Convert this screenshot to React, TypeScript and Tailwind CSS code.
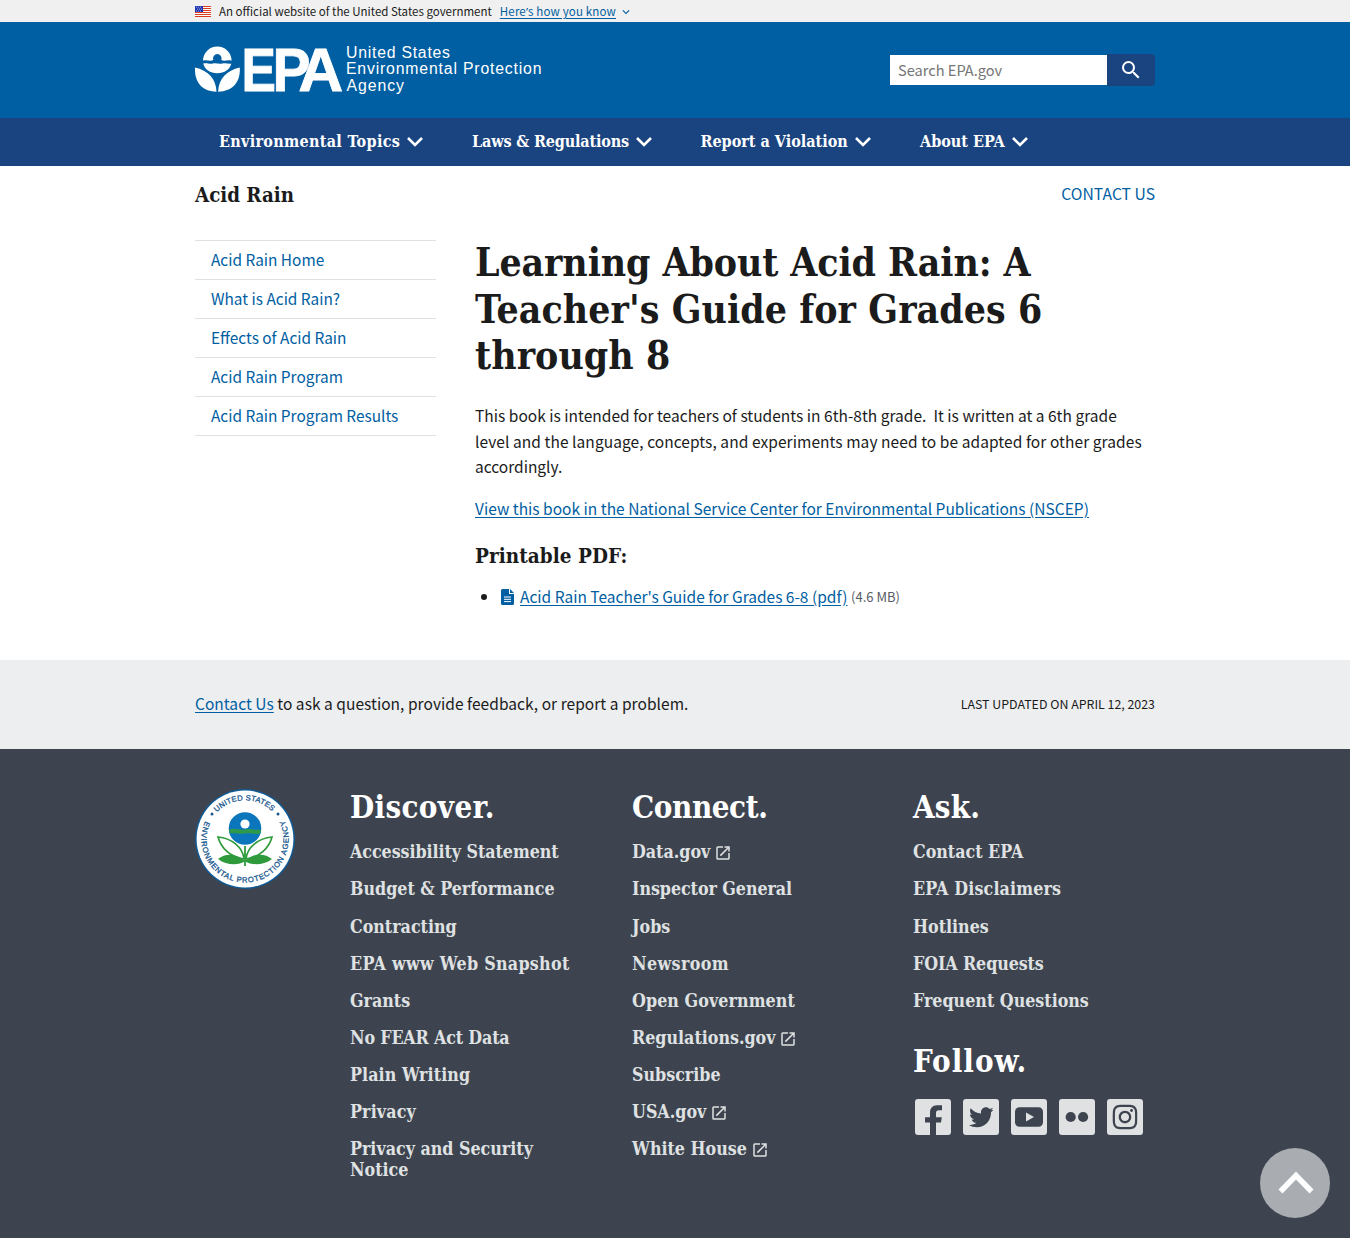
import type { ReactNode } from 'react';
import { FaTwitter, FaInstagram } from 'react-icons/fa';
import { MdSearch, MdExpandMore, MdOpenInNew } from 'react-icons/md';

const link = 'text-[#005ea2] underline underline-offset-[2px]';
const serif = "font-['DejaVu_Serif_Condensed','DejaVu_Serif',serif] font-bold";

function Flag() {
  return (
    <svg viewBox="0 0 16 11" className="h-[11px] w-4">
      <rect width="16" height="11" fill="#fff" />
      {[0, 2, 4, 6, 8, 10].map((y) => (
        <rect key={y} y={y} width="16" height="1" fill="#db3e1f" />
      ))}
      <rect width="8" height="6" fill="#1e33b1" />
      {[1, 3, 5].map((y) =>
        [1, 3, 5].map((x) => <rect key={`${x}-${y}`} x={x + (y === 3 ? 1 : 0)} y={y - 0.3} width="0.8" height="0.8" fill="#fff" />),
      )}
    </svg>
  );
}

function EpaLogo() {
  return (
    <svg viewBox="195 44 350 52" className="h-[52px] w-[350px]" fill="#fff">
      <g transform="translate(0 -0.700)">
        <path d="M203 61.500 A14.300 14.300 0 0 1 231.600 61.500 C228 60 224.500 62.500 221.300 60.700 A4.300 4.300 0 1 0 213.300 60.700 C210 62.500 206.500 60 203 61.500Z" />
        <path d="M203.200 64.200 C207 63 209.500 65.300 213 64.200 C216 63.300 219 65.300 222.500 64.200 C226 63.200 228.500 65 231.400 64.200 C230 70 224.500 74 217.300 74 C210 74 204.600 70 203.200 64.200Z" />
        <path d="M195 68.300 C208 71.300 216 79 216.500 92.500 C202 92.200 194.200 83 195 68.300Z" />
        <path d="M239.800 68.300 C226.800 71.300 218.600 79 218.100 92.500 C232.600 92.200 240.600 83 239.800 68.300Z" />
      </g>
      <g fontFamily="Liberation Sans" fontWeight="bold" fontSize="62" stroke="#fff" strokeWidth="0.800">
        <text x="241.400" y="90.800" textLength="34.500" lengthAdjust="spacingAndGlyphs">E</text>
        <text x="272.600" y="90.800" textLength="38" lengthAdjust="spacingAndGlyphs">P</text>
        <text x="298.300" y="90.800" textLength="45" lengthAdjust="spacingAndGlyphs">A</text>
      </g>
      <g fontFamily="Liberation Sans" fontSize="15.800">
        <text x="346" y="58.300" textLength="104">United States</text>
        <text x="346" y="74.300" textLength="195.500">Environmental Protection</text>
        <text x="346.500" y="90.800" textLength="57.500">Agency</text>
      </g>
    </svg>
  );
}

function Seal() {
  return (
    <svg viewBox="-50 -50 100 100" className="size-[100px]">
      <defs>
        <path id="arc-top" d="M-28.200 -26.600 A38.800 38.800 0 0 1 28.200 -26.600" />
        <path id="arc-bottom" d="M-39.700 -18 A43.600 43.600 0 1 0 39.700 -18" />
      </defs>
      <circle r="49.900" fill="#0f5b96" />
      <circle r="48.400" fill="#fff" />
      <g fontFamily="Liberation Sans" fontSize="7.600" fill="#17578f" stroke="#17578f" strokeWidth="0.300">
        <text textLength="61.500"><textPath href="#arc-top" textLength="61.500">UNITED STATES</textPath></text>
        <text textLength="174.500"><textPath href="#arc-bottom" textLength="174.500">ENVIRONMENTAL PROTECTION AGENCY</textPath></text>
      </g>
      <circle cx="-33" cy="-25" r="1.500" fill="#17578f" />
      <circle cx="33" cy="-25" r="1.500" fill="#17578f" />
      <circle cy="-10.500" r="16.300" fill="#0c76bd" />
      <path d="M-16 -9.500 C-10 -11.500 -5 -8.500 0 -9.500 C6 -10.800 10 -8.500 16 -9.500 L15.200 -5.500 C9 -4 5 -6.500 0 -5.500 C-6 -4.500 -10 -6.500 -15.200 -5.500Z" fill="#2d9a4b" />
      <circle cy="-15" r="4.600" fill="#fff" />
      <path d="M0 7 V27" stroke="#2f9a3c" strokeWidth="1.800" />
      <g fill="#fff" stroke="#2f9a3c" strokeWidth="1.700">
        <path d="M-1 20 C-2 8 -14 -1 -27 -2 C-24 9 -15 18 -1 20Z" />
        <path d="M1 20 C2 8 14 -1 27 -2 C24 9 15 18 1 20Z" />
      </g>
      <path d="M-27 20 C-19 13 -7 15 0 22 C7 15 19 13 27 20 C18 27 6 26 0 22.500 C-6 26 -18 27 -27 20Z" fill="#2f9a3c" />
    </svg>
  );
}

function NavItem({ label, className }: { label: string; className: string }) {
  return (
    <a className={`flex h-12 items-center justify-between pl-6 pr-[25px] text-base whitespace-nowrap ${serif} ${className}`}>
      <span>{label}</span>
      <svg viewBox="0 0 16 10" className="h-[10px] w-4 shrink-0" fill="none" stroke="#fff" strokeWidth="2.600">
        <path d="M1 1 L8 8 L15 1" />
      </svg>
    </a>
  );
}

type FooterLink = { label: string; external?: boolean; tracking?: string };

const discover: FooterLink[] = [
  { label: 'Accessibility Statement', tracking: 'tracking-[-0.05px]' },
  { label: 'Budget & Performance' },
  { label: 'Contracting' },
  { label: 'EPA www Web Snapshot', tracking: 'tracking-[0.3px]' },
  { label: 'Grants' },
  { label: 'No FEAR Act Data', tracking: 'tracking-[-0.15px]' },
  { label: 'Plain Writing', tracking: 'tracking-[0.08px]' },
  { label: 'Privacy', tracking: 'tracking-[0.15px]' },
  { label: 'Privacy and Security Notice' },
];
const connect: FooterLink[] = [
  { label: 'Data.gov', external: true },
  { label: 'Inspector General', tracking: 'tracking-[-0.05px]' },
  { label: 'Jobs' },
  { label: 'Newsroom', tracking: 'tracking-[0.4px]' },
  { label: 'Open Government', tracking: 'tracking-[0.08px]' },
  { label: 'Regulations.gov', external: true },
  { label: 'Subscribe' },
  { label: 'USA.gov', external: true },
  { label: 'White House', external: true },
];
const ask: FooterLink[] = [
  { label: 'Contact EPA' },
  { label: 'EPA Disclaimers', tracking: 'tracking-[0.15px]' },
  { label: 'Hotlines' },
  { label: 'FOIA Requests', tracking: 'tracking-[-0.1px]' },
  { label: 'Frequent Questions' },
];

function Heading({ children, className }: { children: ReactNode; className: string }) {
  return <h2 className={`h-[38px] text-[31px] leading-[38px] text-white ${serif} ${className}`}>{children}</h2>;
}

function LinkList({ items }: { items: FooterLink[] }) {
  return (
    <ul className={`mt-[15.4px] flex flex-col gap-4 text-[17.7px] leading-[21.100px] text-[#dfe1e2] ${serif}`}>
      {items.map((item) => (
        <li key={item.label} className={`flex items-center ${item.tracking ?? ''}`}>
          {item.label}
          {item.external && <MdOpenInNew className="mt-[3px] ml-[4px] size-[18px]" />}
        </li>
      ))}
    </ul>
  );
}

function SocialTile({ children }: { children: ReactNode }) {
  return <a className="flex size-9 items-center justify-center rounded-[3px] bg-[#dfe1e2] text-[#3e444f]">{children}</a>;
}

export default function App() {
  return (
    <div className="relative flex h-[1238px] w-[1350px] flex-col overflow-hidden bg-white font-['Noto_Sans_CJK_SC',sans-serif] text-[15.5px] text-[#1b1b1b]">
      <div className="h-[22px] bg-[#f0f0f0]">
        <div className="mx-auto flex h-full w-[960px] items-center text-[11.5px] whitespace-nowrap">
          <Flag />
          <span className="mt-px ml-2">An official website of the United States government</span>
          <a className="mt-px ml-2 flex items-center text-[#005ea2]">
            <span className="tracking-[0.16px] underline underline-offset-[2px]">
              Here<span className="font-['Noto_Sans']">’</span>s how you know
            </span>
            <MdExpandMore className="ml-[3px] size-[14px]" />
          </a>
        </div>
      </div>

      <header>
        <div className="h-24 bg-[#005ea2]">
          <div className="mx-auto flex h-full w-[960px] items-center justify-between">
            <EpaLogo />
            <div className="flex h-8 w-[265px] items-center">
              <div className="flex h-[30px] w-[217px] items-center bg-white pl-2 text-[14.6px] text-[#757575]">Search EPA.gov</div>
              <button className="flex h-8 w-12 items-center justify-center rounded-r bg-[#1a4480] text-white">
                <MdSearch className="size-6" />
              </button>
            </div>
          </div>
        </div>
        <nav className="h-12 bg-[#1a4480] text-white">
          <div className="mx-auto flex w-[960px]">
            <NavItem label="Environmental Topics" className="w-[253px] tracking-[0.3px]" />
            <NavItem label="Laws & Regulations" className="w-[228.500px] tracking-[-0.150px]" />
            <NavItem label="Report a Violation" className="w-[219.500px]" />
            <NavItem label="About EPA" className="w-[157px]" />
          </div>
        </nav>
      </header>

      <main className="mx-auto w-[960px]">
        <div className="flex h-[57px] items-center justify-between">
          <div className={`mt-px text-[20.3px] ${serif}`}>Acid Rain</div>
          <a className="-mt-[2px] text-[15.7px] text-[#005ea2]">CONTACT US</a>
        </div>
        <div className="mt-[17px] flex gap-[39px]">
          <ul className="h-[196px] w-[241px] shrink-0 border-b border-[#dfe1e2] text-[15.400px] text-[#005ea2]">
            {['Acid Rain Home', 'What is Acid Rain?', 'Effects of Acid Rain', 'Acid Rain Program', 'Acid Rain Program Results'].map((t) => (
              <li key={t} className="flex h-[39px] items-center border-t border-[#dfe1e2] pl-4">{t}</li>
            ))}
          </ul>
          <div className="w-[680px]">
            <h1 className={`text-[38.8px] leading-[46.6px] tracking-[0.060px] ${serif}`}>
              <span className="tracking-[-0.1px]">Learning About Acid Rain: A</span>
              <br />
              Teacher's Guide for Grades 6
              <br />
              through 8
            </h1>
            <p className="mt-[23.300px] leading-[25.6px] whitespace-nowrap">
              <span className="tracking-[0.020px]">This book is intended for teachers of students in 6th-8th grade.&nbsp; It is written at a 6th grade</span>
              <br />
              <span className="tracking-[0.07px]">level and the language, concepts, and experiments may need to be adapted for other grades</span>
              <br />
              accordingly.
            </p>
            <p className="mt-[15.700px] leading-[25.6px]">
              <a className={`tracking-[0.012px] ${link}`}>View this book in the National Service Center for Environmental Publications (NSCEP)</a>
            </p>
            <h3 className={`mt-[22px] text-[20.5px] leading-[27px] tracking-[0.050px] ${serif}`}>Printable PDF:</h3>
            <ul className="mt-[14px] leading-[25.6px]">
              <li className="flex items-center">
                <span className="mr-[13.500px] ml-[6px] size-[6px] rounded-full bg-[#1b1b1b]" />
                <svg viewBox="0 0 13 16" className="mr-[6.500px] h-4 w-[13px]" fill="#005ea2">
                  <path d="M1.500 0 H8 V4.500 Q8 5 8.500 5 H13 V14.500 Q13 16 11.500 16 H1.500 Q0 16 0 14.500 V1.500 Q0 0 1.500 0Z M9 0 L13 4 H9Z" />
                  <path d="M3 8 H10 M3 10.300 H10 M3 12.600 H10" stroke="#fff" strokeWidth="1" />
                </svg>
                <a className={link}>Acid Rain Teacher's Guide for Grades 6-8 (pdf)</a>
                <span className="ml-[3.500px] text-[13px] text-[#565c65]">(4.6 MB)</span>
              </li>
            </ul>
          </div>
        </div>
      </main>

      <section className="mt-auto h-[89px] bg-[#edeef0]">
        <div className="mx-auto flex h-full w-[960px] items-center justify-between">
          <p className="-mt-[2px] tracking-[0.040px]">
            <a className={link}>Contact Us</a> to ask a question, provide feedback, or report a problem.
          </p>
          <span className="text-[12.4px]">LAST UPDATED ON APRIL 12, 2023</span>
        </div>
      </section>

      <footer className="h-[489px] bg-[#3e444f]">
        <div className="mx-auto flex w-[960px] pt-[39px]">
          <div className="w-[155px] shrink-0 pt-px">
            <Seal />
          </div>
          <div className="w-[282px] shrink-0 pr-14">
            <Heading className="tracking-[0.35px]">Discover.</Heading>
            <LinkList items={discover} />
          </div>
          <div className="w-[281px] shrink-0">
            <Heading className="tracking-[-0.4px]">Connect.</Heading>
            <LinkList items={connect} />
          </div>
          <div className="w-[242px] shrink-0">
            <Heading className="tracking-[0.2px]">Ask.</Heading>
            <LinkList items={ask} />
            <div className="mt-[31px]">
              <Heading className="tracking-[1px]">Follow.</Heading>
            </div>
            <div className="mt-[19.500px] ml-[2px] flex gap-3">
              <SocialTile>
                <svg viewBox="0 0 36 36" className="size-9" fill="currentColor">
                  <path d="M15 36 V23.500 H10 V18.300 H15 V14 Q15 6.300 22 6.300 H27 V11.200 H23.800 Q21 11.200 21 14 V18.300 H26.800 L26 23.500 H21 V36Z" />
                </svg>
              </SocialTile>
              <SocialTile>
                <FaTwitter className="size-[24.500px]" />
              </SocialTile>
              <SocialTile>
                <svg viewBox="0 0 36 36" className="size-9">
                  <rect x="4" y="8.200" width="28" height="19.600" rx="4.500" fill="currentColor" />
                  <path d="M15 13.600 L23 18 L15 22.400Z" fill="#dfe1e2" />
                </svg>
              </SocialTile>
              <SocialTile>
                <svg viewBox="0 0 36 36" className="size-9" fill="currentColor">
                  <circle cx="11.700" cy="18" r="5.100" />
                  <circle cx="24.100" cy="18" r="5.100" />
                </svg>
              </SocialTile>
              <SocialTile>
                <FaInstagram className="size-7" />
              </SocialTile>
            </div>
          </div>
        </div>
      </footer>

      <button className="absolute right-5 bottom-5 size-[70px] rounded-full bg-[#a9adb2]">
        <svg viewBox="0 0 70 70" className="size-[70px]" fill="none" stroke="#fff" strokeWidth="5.500">
          <path d="M20.500 43.500 L36 27.500 L51.500 43.500" />
        </svg>
      </button>
    </div>
  );
}
